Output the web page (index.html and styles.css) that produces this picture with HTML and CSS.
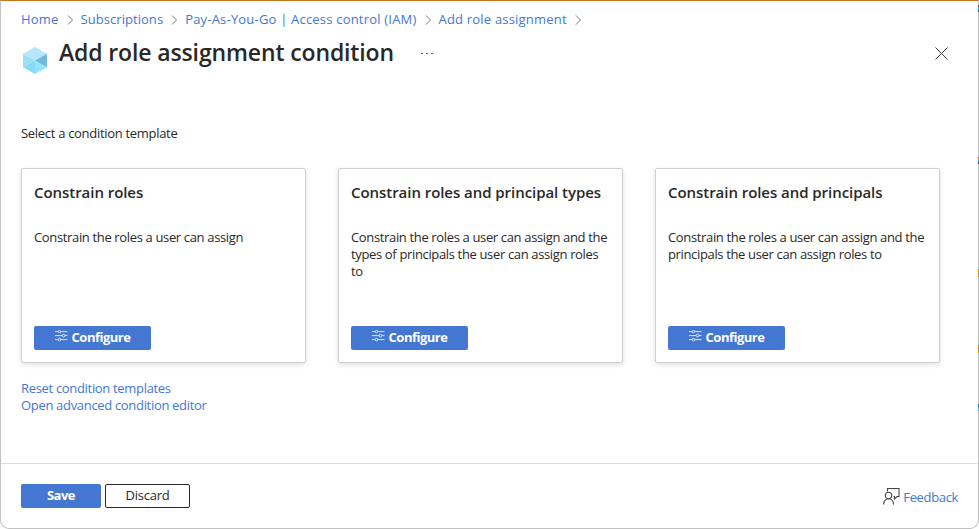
FILE: index.html
```
<!DOCTYPE html>
<html lang="en">
<head>
<meta charset="utf-8">
<title>Add role assignment condition</title>
<link rel="stylesheet" href="styles.css">
</head>
<body>
<svg class="defs" width="0" height="0">
  <symbol id="chev" viewBox="0 0 7 12"><path d="M1 1.5 5.5 6 1 10.5" fill="none" stroke="#767676"/></symbol>
  <symbol id="sliders" viewBox="0 0 13 12"><g fill="none" stroke="#fff" stroke-width=".8"><path d="M0 1.600h3M6 1.600h6.500M0 5.600h7M10 5.600h2.500M0 9.600h3M6 9.600h6.500"/><circle cx="4.500" cy="1.600" r="1.200"/><circle cx="8.500" cy="5.600" r="1.300"/><circle cx="4.500" cy="9.600" r="1.300"/></g></symbol>
</svg>
<div class="page">
  <main class="content">
    <nav class="crumbs">
      <a class="c1">Home</a><svg><use href="#chev"/></svg>
      <a class="c2">Subscriptions</a><svg><use href="#chev"/></svg>
      <a class="c3">Pay-As-You-Go | Access control (IAM)</a><svg><use href="#chev"/></svg>
      <a class="c4">Add role assignment</a><svg><use href="#chev"/></svg>
    </nav>
    <header class="head">
      <svg class="cube" viewBox="0 0 24 27"><path d="M12 0 24 6.800 12 13.500 0 6.800z" fill="#b5e6fb"/><path d="M0 6.800 12 13.500 0 20.200z" fill="#9cdff8"/><path d="M0 20.200 12 13.500V27z" fill="#86dbf8"/><path d="M12 13.500 24 20.200 12 27z" fill="#93e2ff"/><path d="M24 6.800v13.400L12 13.500z" fill="#72b9d9"/></svg>
      <h1>Add role assignment condition</h1>
      <span class="more"><i></i><i></i><i></i></span>
      <svg class="close" viewBox="0 0 13 13"><path d="M.5.500l12 12M12.500.500l-12 12" stroke="#3b3a39" stroke-width="1"/></svg>
    </header>
    <p class="lead">Select a condition template</p>
    <section class="cards">
      <article class="card"><h2 class="t1">Constrain roles</h2><p>Constrain the roles a user can assign</p><button class="btn configure"><svg><use href="#sliders"/></svg><span>Configure</span></button></article>
      <article class="card"><h2 class="t2">Constrain roles and principal types</h2><p>Constrain the roles a user can assign and the<br>types of principals the user can assign roles<br>to</p><button class="btn configure"><svg><use href="#sliders"/></svg><span>Configure</span></button></article>
      <article class="card"><h2 class="t3">Constrain roles and principals</h2><p>Constrain the roles a user can assign and the<br>principals the user can assign roles to</p><button class="btn configure"><svg><use href="#sliders"/></svg><span>Configure</span></button></article>
    </section>
    <div class="links"><a>Reset condition templates</a><a>Open advanced condition editor</a></div>
  </main>
  <footer class="footer">
    <button class="btn save"><span>Save</span></button>
    <button class="btn discard"><span>Discard</span></button>
    <a class="feedback"><svg viewBox="0 0 17 17"><g fill="none" stroke="#484644" stroke-width="1.100"><path d="M4.500 3.500v-3h11.500v8h-2l-2.500 2.500v-2.500h-1"/><circle cx="5.500" cy="7.500" r="3.200"/><path d="M.600 16.500c0-7.600 9.900-7.600 9.900 0"/></g></svg><span>Feedback</span></a>
  </footer>
</div>
<div class="edge"></div>
</body>
</html>
```
FILE: styles.css
```
* { box-sizing: border-box; margin: 0; padding: 0; }
body { width: 979px; height: 529px; overflow: hidden; background: #fff; color: #292827; font: 13px/17px "Open Sans", "Noto Sans", sans-serif; }
.defs { position: absolute; }
a { color: #4477d2; }
.page { display: flex; flex-direction: column; height: 529px; border: 1px solid #c0c0c0; border-top-color: #c5741b; border-radius: 0 0 9px 9px; }
.content { flex: 1; padding: 9px 20px 0; }
.crumbs { display: flex; align-items: center; height: 19px; white-space: nowrap; letter-spacing: .2px; }
.c2 { letter-spacing: .05px; }
.crumbs svg { width: 7px; height: 12px; margin: 0 7px 0 8px; }
.head { display: flex; height: 48px; }
.cube { width: 24px; height: 27px; margin: 18px 0 0 2px; }
h1 { margin: 7px 0 0 12px; font-size: 23px; line-height: 32px; font-weight: 600; white-space: nowrap; letter-spacing: -.13px; }
.more { display: flex; gap: 3px; margin: 24px 0 0 27px; }
.more i { width: 2px; height: 1px; background: #605e5c; }
.close { width: 13px; height: 13px; margin: 18px 10px 0 auto; }
.lead { margin-top: 48px; letter-spacing: -.3px; }
.cards { display: grid; grid-template-columns: repeat(3, 285px); gap: 32px; margin-top: 26px; }
.card { display: flex; flex-direction: column; height: 195px; padding: 12px 12px 12px; border: 1px solid #d2d0ce; border-radius: 2px; box-shadow: 0 2px 5px rgba(0,0,0,.12); white-space: nowrap; }
h2 { font-size: 15px; line-height: 22px; font-weight: 600; letter-spacing: -.05px; }
.card p { margin-top: 26px; letter-spacing: -.35px; }
.btn { display: flex; align-items: center; justify-content: center; height: 24px; border: 0; border-radius: 2px; background: #4477d2; color: #fff; font: 700 13px/17px "Open Sans", sans-serif; letter-spacing: -.5px; padding-bottom: 2px; }
.configure { width: 117px; margin-top: auto; }
.configure svg { width: 13px; height: 12px; margin: -2px 4px 0 0; }
.links { display: flex; flex-direction: column; margin-top: 17px; letter-spacing: -.32px; }
.footer { display: flex; align-items: center; height: 65px; padding: 0 20px; border-top: 1px solid #dcdcdc; }
.save { width: 80px; }
.discard { width: 85px; margin-left: 4px; border: 1px solid #292827; background: #fff; color: #292827; font-weight: 400; letter-spacing: -.25px; }
.feedback { display: flex; align-items: center; margin-left: auto; letter-spacing: -.35px; }
.feedback svg { width: 17px; height: 17px; margin-right: 3px; }
.feedback span { padding-top: 2px; }
/* Coloured ticks on the window's right border */
.edge {
  position: absolute; right: 0; top: 0; width: 1px; height: 520px;
  background: linear-gradient(#5b4a42 0 2px, #4fb0dc 2px 5px, #443c5c 5px 7px) 0 5px / 1px 7px no-repeat,
    linear-gradient(#a06c40 0 2px, #63a4d6 2px 5px, #383850 5px 7px) 0 157px / 1px 7px no-repeat,
    linear-gradient(#c88b27, #c88b27) 0 269px / 1px 8px no-repeat,
    linear-gradient(#b5880f, #b5880f) 0 345px / 1px 8px no-repeat,
    linear-gradient(#286fa8 0 3px, #58a5e4 3px 7px) 0 404px / 1px 7px no-repeat;
}
```
